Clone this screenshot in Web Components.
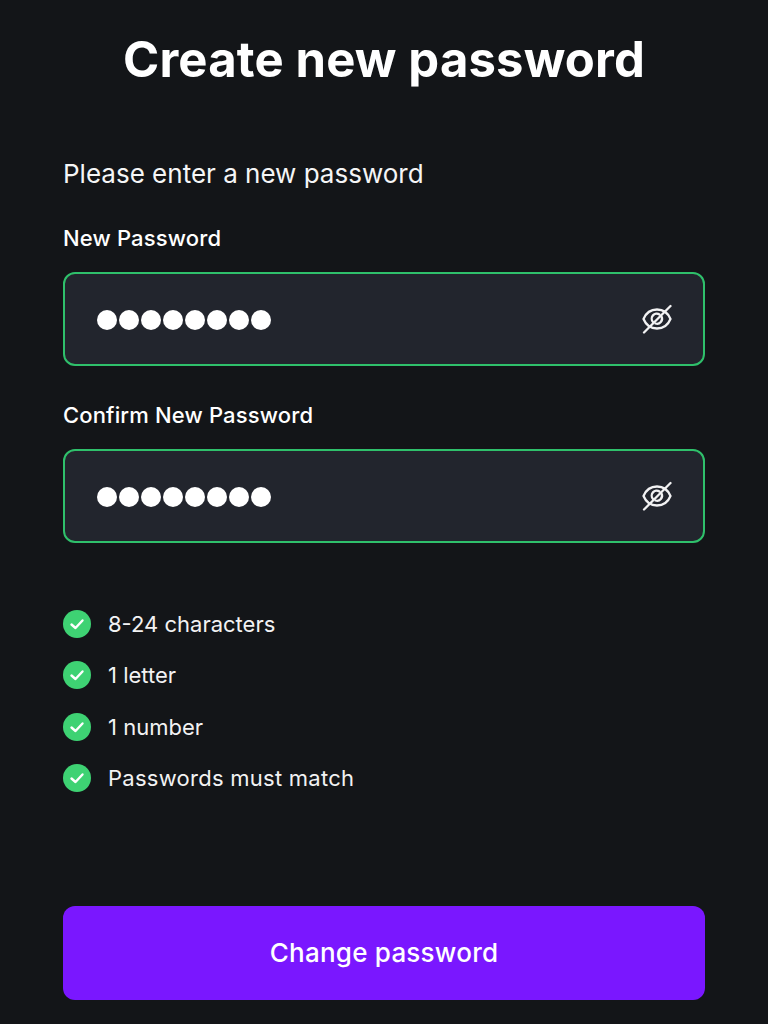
<!DOCTYPE html>
<html lang="en">
<head>
<meta charset="utf-8">
<title>Create new password</title>
<style>
  html, body { margin: 0; height: 100%; background: #131518; }
  body { font-family: Inter, "Liberation Sans", sans-serif; color: #fff; overflow: hidden; }
</style>
</head>
<body>
<password-screen>
  <h-title slot="title">Create new password</h-title>
  <span slot="intro">Please enter a new password</span>
  <password-field slot="fields" label="New Password" count="8"></password-field>
  <password-field slot="fields" label="Confirm New Password" count="8"></password-field>
  <rule-item slot="rules">8-24 characters</rule-item>
  <rule-item slot="rules">1 letter</rule-item>
  <rule-item slot="rules">1 number</rule-item>
  <rule-item slot="rules" style="letter-spacing: 0.26px">Passwords must match</rule-item>
  <primary-button slot="action">Change password</primary-button>
</password-screen>

<script>
class HTitle extends HTMLElement {
  constructor() {
    super();
    this.attachShadow({ mode: "open" });
    this.shadowRoot.innerHTML = `
      <style>
        :host { display: block; text-align: center; font-size: 49px; line-height: 56px; font-weight: 700; letter-spacing: 0.15px; }
      </style>
      <slot></slot>`;
  }
}

class PasswordField extends HTMLElement {
  constructor() {
    super();
    this.attachShadow({ mode: "open" });
  }

  connectedCallback() {
    const count = parseInt(this.getAttribute("count"));
    const dots = Array.from({ length: count }, () => `<i></i>`).join("");
    this.shadowRoot.innerHTML = `
      <style>
        :host { display: block; }
        label { display: block; font-size: 22px; line-height: 28px; font-weight: 500; letter-spacing: 0.15px; margin-bottom: 20px; }
        .box {
          box-sizing: border-box; height: 94px; display: flex; align-items: center; justify-content: space-between;
          padding: 0 31px 0 32px; background: #22252d; border: 2px solid #2fc06b; border-radius: 12px;
        }
        .dots { display: flex; gap: 2px; margin-top: 2px; }
        i { display: block; width: 20px; height: 20px; border-radius: 50%; background: #fff; }
        svg { display: block; width: 30px; height: 30px; }
      </style>
      <label>${this.getAttribute("label")}</label>
      <div class="box">
        <div class="dots">${dots}</div>
        <svg viewBox="0 0 30 30" fill="none" stroke="#f2f2f3" stroke-width="2.300" stroke-linecap="round" stroke-linejoin="round">
          <path d="M1.500 15C4 9 9 5.500 15 5.500S26 9 28.500 15C26 21 21 24.500 15 24.500S4 21 1.500 15z"/>
          <path d="M11 18a5 5 0 0 1 6.500-7.500M19.500 12.500a5 5 0 0 1-6 7"/>
          <path d="M2 28.500L28.500 2"/>
        </svg>
      </div>`;
  }
}

class RuleItem extends HTMLElement {
  constructor() {
    super();
    this.attachShadow({ mode: "open" });
    this.shadowRoot.innerHTML = `
      <style>
        :host { display: flex; align-items: center; gap: 17px; height: 28px; font-size: 22px; line-height: 28px; color: #f2f2f3; }
        svg { display: block; width: 28px; height: 28px; flex: none; }
      </style>
      <svg viewBox="0 0 28 28">
        <circle cx="14" cy="14" r="14" fill="#3ed273"/>
        <path d="M8.500 14.500l4 3.500 7-7.500" fill="none" stroke="#fff" stroke-width="2.400" stroke-linecap="round" stroke-linejoin="round"/>
      </svg>
      <span><slot></slot></span>`;
  }
}

class PrimaryButton extends HTMLElement {
  constructor() {
    super();
    this.attachShadow({ mode: "open" });
    this.shadowRoot.innerHTML = `
      <style>
        :host {
          display: flex; align-items: center; justify-content: center; height: 94px; border-radius: 12px;
          background: #7a17ff; color: #fff; font-size: 26px; font-weight: 500; letter-spacing: 0.23px;
        }
      </style>
      <slot></slot>`;
  }
}

class PasswordScreen extends HTMLElement {
  constructor() {
    super();
    this.attachShadow({ mode: "open" });
    this.shadowRoot.innerHTML = `
      <style>
        :host { display: block; box-sizing: border-box; height: 1024px; padding: 32px 63px 0; }
        .intro { margin-top: 70px; font-size: 26px; line-height: 32px; color: #f5f5f6; }
        .fields { margin-top: 34px; display: flex; flex-direction: column; gap: 35px; }
        .rules { margin-top: 67px; display: flex; flex-direction: column; gap: 23.300px; }
        .action { margin-top: 114px; }
      </style>
      <slot name="title"></slot>
      <div class="intro"><slot name="intro"></slot></div>
      <div class="fields"><slot name="fields"></slot></div>
      <div class="rules"><slot name="rules"></slot></div>
      <div class="action"><slot name="action"></slot></div>`;
  }
}

customElements.define("h-title", HTitle);
customElements.define("password-field", PasswordField);
customElements.define("rule-item", RuleItem);
customElements.define("primary-button", PrimaryButton);
customElements.define("password-screen", PasswordScreen);
</script>
</body>
</html>
